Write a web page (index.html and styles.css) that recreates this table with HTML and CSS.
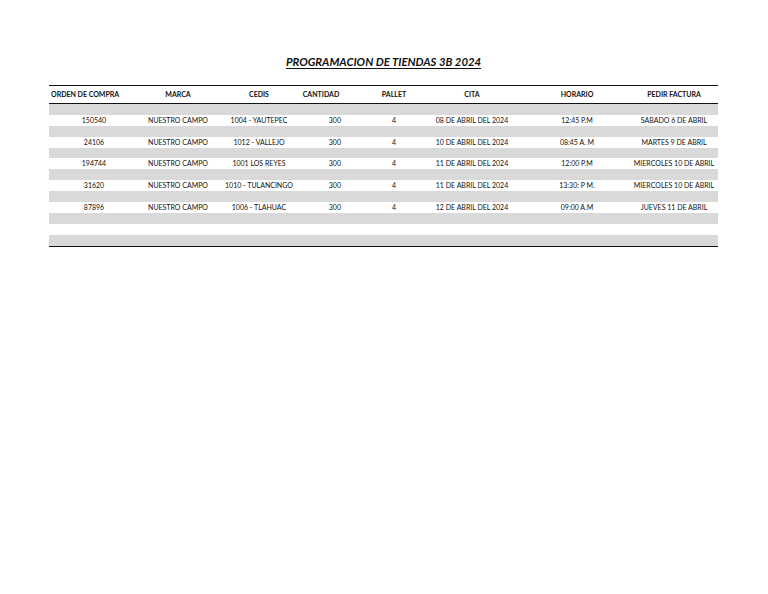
FILE: index.html
```html
<!DOCTYPE html>
<html lang="es">
<head>
<meta charset="utf-8">
<title>Programacion de tiendas 3B 2024</title>
<link rel="stylesheet" href="styles.css">
</head>
<body>
<div class="sheet">
  <h1 class="title">PROGRAMACION DE TIENDAS 3B 2024</h1>
  <div class="table">
    <div class="row head">
      <div class="cell left"><span>ORDEN DE COMPRA</span></div>
      <div class="cell"><span>MARCA</span></div>
      <div class="cell"><span>CEDIS</span></div>
      <div class="cell"><span>CANTIDAD</span></div>
      <div class="cell"><span>PALLET</span></div>
      <div class="cell"><span>CITA</span></div>
      <div class="cell"><span>HORARIO</span></div>
      <div class="cell"><span>PEDIR FACTURA</span></div>
      <div class="cell"></div>
    </div>
    <div class="row band"></div>
    <div class="row">
      <div class="cell"><span>150540</span></div>
      <div class="cell"><span>NUESTRO CAMPO</span></div>
      <div class="cell"><span>1004 - YAUTEPEC</span></div>
      <div class="cell right"><span>300</span></div>
      <div class="cell"><span>4</span></div>
      <div class="cell"><span>08 DE ABRIL DEL 2024</span></div>
      <div class="cell"><span>12:45 P.M</span></div>
      <div class="cell"><span>SABADO 6 DE ABRIL</span></div>
      <div class="cell"></div>
    </div>
    <div class="row band"></div>
    <div class="row">
      <div class="cell"><span>24106</span></div>
      <div class="cell"><span>NUESTRO CAMPO</span></div>
      <div class="cell"><span>1012 - VALLEJO</span></div>
      <div class="cell right"><span>300</span></div>
      <div class="cell"><span>4</span></div>
      <div class="cell"><span>10 DE ABRIL DEL 2024</span></div>
      <div class="cell"><span>08:45 A. M</span></div>
      <div class="cell"><span>MARTES 9 DE ABRIL</span></div>
      <div class="cell"></div>
    </div>
    <div class="row band"></div>
    <div class="row">
      <div class="cell"><span>194744</span></div>
      <div class="cell"><span>NUESTRO CAMPO</span></div>
      <div class="cell"><span>1001 LOS REYES</span></div>
      <div class="cell right"><span>300</span></div>
      <div class="cell"><span>4</span></div>
      <div class="cell"><span>11 DE ABRIL DEL 2024</span></div>
      <div class="cell"><span>12:00 P.M</span></div>
      <div class="cell"><span>MIERCOLES 10 DE ABRIL</span></div>
      <div class="cell"></div>
    </div>
    <div class="row band"></div>
    <div class="row">
      <div class="cell"><span>31620</span></div>
      <div class="cell"><span>NUESTRO CAMPO</span></div>
      <div class="cell"><span>1010 - TULANCINGO</span></div>
      <div class="cell right"><span>300</span></div>
      <div class="cell"><span>4</span></div>
      <div class="cell"><span>11 DE ABRIL DEL 2024</span></div>
      <div class="cell"><span>13:30: P M.</span></div>
      <div class="cell"><span>MIERCOLES 10 DE ABRIL</span></div>
      <div class="cell"></div>
    </div>
    <div class="row band"></div>
    <div class="row">
      <div class="cell"><span>87896</span></div>
      <div class="cell"><span>NUESTRO CAMPO</span></div>
      <div class="cell"><span>1006 - TLAHUAC</span></div>
      <div class="cell right"><span>300</span></div>
      <div class="cell"><span>4</span></div>
      <div class="cell"><span>12 DE ABRIL DEL 2024</span></div>
      <div class="cell"><span>09:00 A.M</span></div>
      <div class="cell"><span>JUEVES 11 DE ABRIL</span></div>
      <div class="cell"></div>
    </div>
    <div class="row band"></div>
    <div class="row"></div>
    <div class="row band last"></div>
  </div>
</div>
</body>
</html>
```

FILE: styles.css
```css
html, body {
  margin: 0;
  padding: 0;
  background: #ffffff;
}

body {
  font-family: Lato, "Liberation Sans", sans-serif;
  color: #111;
}

.sheet {
  width: 669px;
  margin-left: 49px;
  padding-top: 55px;
}

.title {
  margin: 0 0 16px 0;
  text-align: center;
  font-size: 11.3px;
  line-height: 14px;
  font-weight: 700;
  font-style: italic;
  text-decoration: underline;
  text-underline-offset: 2px;
  color: #111;
}

.table {
  display: flex;
  flex-direction: column;
}

.row {
  display: grid;
  grid-template-columns: 90px 78px 84px 40px 106px 50px 160px 34px 27px;
  height: 10.9px;
  font-size: 7px;
  line-height: 10.9px;
}

.row.head {
  height: 17px;
  line-height: 17px;
  font-weight: 700;
  font-size: 7px;
  border-top: 1px solid #111;
  border-bottom: 1px solid #111;
}

.band {
  background: #d9d9d9;
}

.band.last {
  border-bottom: 1.5px solid #111;
}

.cell {
  display: flex;
  justify-content: center;
  white-space: nowrap;
  min-width: 0;
}

.cell.left {
  justify-content: flex-start;
  padding-left: 2px;
}

.cell.right {
  justify-content: flex-end;
}
```
